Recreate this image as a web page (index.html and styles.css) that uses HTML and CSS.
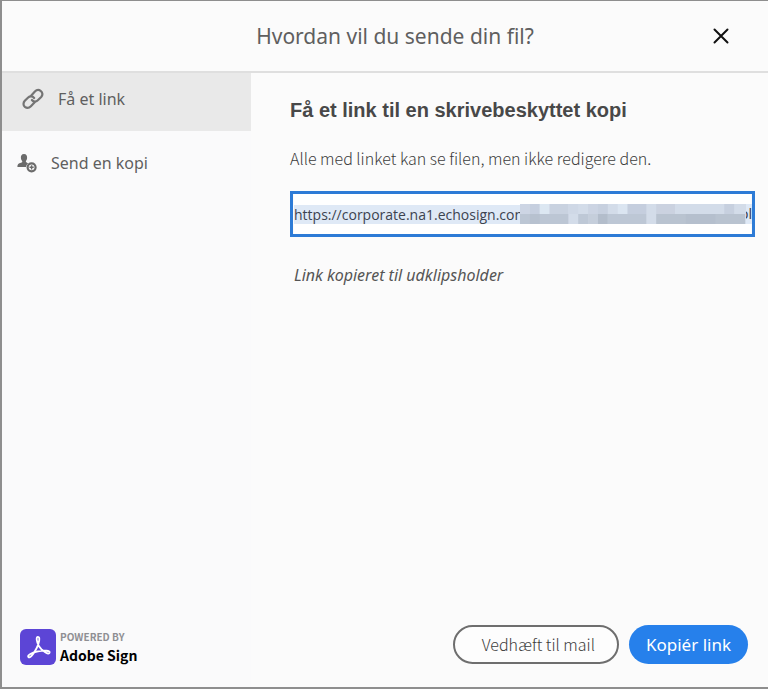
FILE: index.html
```html
<!DOCTYPE html>
<html lang="da">
<head>
    <meta charset="UTF-8">
    <meta name="viewport" content="width=device-width, initial-scale=1.0">
    <title>Hvordan vil du sende din fil?</title>
    <link rel="stylesheet" href="styles.css">
</head>
<body>
    <div class="dialog">
        <header class="dialog-header">
            <h1>Hvordan vil du sende din fil?</h1>
            <button class="close" type="button" aria-label="Luk">
                <svg width="16" height="16" viewBox="0 0 16 16">
                    <path d="M1.5 1.5L14.5 14.5M14.5 1.5L1.5 14.5" fill="none" stroke="#111" stroke-width="2" stroke-linecap="round"/>
                </svg>
            </button>
        </header>
        <div class="dialog-body">
            <aside class="sidebar">
                <nav>
                    <a class="nav-item active" href="#link">
                        <svg width="22" height="22" viewBox="0 0 22 22">
                            <g fill="none" stroke="#747474" stroke-width="2.2" stroke-linecap="round">
                                <path d="M9.3 7.6L12.9 3.6C14.3 2 16.6 1.3 18.6 2.8C20.9 4.6 20.9 7.1 19.2 9L15.8 12.3C14 14 11.4 13.9 9.9 12"/>
                                <path d="M12.7 14.2L8.9 18.2C7.2 20 4.8 20.4 2.9 18.9C1 17.2 1.1 14.7 2.8 12.8L6.2 9.5C8 7.8 10.6 8.1 12.1 10"/>
                            </g>
                        </svg>
                        Få et link
                    </a>
                    <a class="nav-item copy" href="#kopi">
                        <svg width="20" height="20" viewBox="0 0 20 20">
                            <path d="M7 1C9.4 1 10.3 2.7 10.1 5C10 6.7 9.1 7.6 8.8 8.6C8.9 9.5 10.3 9.9 11.1 10.4A5.2 5.2 0 0 0 9 14H.4C.3 11.2 1.5 10.4 4 9.8C5 9.5 5.3 9.3 5.3 8.6C4.9 7.6 4 6.7 3.9 5C3.7 2.7 4.6 1 7 1Z" fill="#6b6b6b"/>
                            <circle cx="14.6" cy="14.3" r="4" fill="none" stroke="#6b6b6b" stroke-width="2.2"/>
                            <path d="M14.6 12.2V16.4M12.5 14.3H16.7" stroke="#6b6b6b" stroke-width="1.4"/>
                        </svg>
                        Send en kopi
                    </a>
                </nav>
                <div class="brand">
                    <svg width="36" height="36" viewBox="0 0 36 36">
                        <rect width="36" height="36" rx="6" fill="#5c45d6"/>
                        <path d="M8.4 28C6.8 26.4 12 23.4 18 22.3C24 21.2 30.4 21.4 29.6 23.8C28.7 26.2 22.2 22.4 19 17.2C16.5 13 15.8 7.8 18 7.8C20.4 7.8 19.2 14 16.7 19C13.6 25.2 10 29.6 8.4 28Z" fill="none" stroke="#fff" stroke-width="1.8" stroke-linejoin="round"/>
                    </svg>
                    <div>
                        <div class="powered">POWERED BY</div>
                        <div class="product">Adobe Sign</div>
                    </div>
                </div>
            </aside>
            <main class="content">
                <h2>Få et link til en skrivebeskyttet kopi</h2>
                <label class="hint" for="shareLink">Alle med linket kan se filen, men ikke redigere den.</label>
                <div class="link-field">
                    <input type="text" id="shareLink" value="https://corporate.na1.echosign.con" readonly>
                    <div class="masked">
                        <svg width="229" height="20" viewBox="0 0 229 20" preserveAspectRatio="none">
                            <rect width="229" height="20" fill="#d3dce9"/>
                            <rect width="10" height="10" fill="#cdd5e4"/>
                            <rect x="10" width="10" height="10" fill="#c6cfdf"/>
                            <rect x="20" width="10" height="10" fill="#dce7f2"/>
                            <rect x="30" width="19" height="10" fill="#c9d2e0"/>
                            <rect x="49" width="10" height="10" fill="#cfd8e6"/>
                            <rect x="69" width="10" height="10" fill="#ccd4e3"/>
                            <rect x="79" width="10" height="10" fill="#c7d0df"/>
                            <rect x="99" width="10" height="10" fill="#dbe5f1"/>
                            <rect x="109" width="19" height="10" fill="#c5cede"/>
                            <rect x="138" width="19" height="10" fill="#cbd2e0"/>
                            <rect x="207" width="10" height="10" fill="#c7d0df"/>
                            <rect y="10" width="49" height="10" fill="#bcc6d4"/>
                            <rect x="10" y="10" width="10" height="10" fill="#b7c1cf"/>
                            <rect x="59" y="10" width="10" height="10" fill="#bec8d6"/>
                            <rect x="69" y="10" width="10" height="10" fill="#c5cedb"/>
                            <rect x="79" y="10" width="10" height="10" fill="#b3bdcb"/>
                            <rect x="89" y="10" width="39" height="10" fill="#bdc7d5"/>
                            <rect x="138" y="10" width="90" height="10" fill="#b9c3d0"/>
                            <rect x="168" y="10" width="30" height="10" fill="#b5bfcd"/>
                        </svg>
                        <span>ol</span>
                    </div>
                </div>
                <p class="status">Link kopieret til udklipsholder</p>
                <div class="actions">
                    <button class="btn btn-outline" type="button">Vedhæft til mail</button>
                    <button class="btn btn-primary" type="button">Kopiér link</button>
                </div>
            </main>
        </div>
    </div>
</body>
</html>
```
FILE: styles.css
```css
* {
    box-sizing: border-box;
}
body {
    margin: 0;
    font-family: "Noto Sans", "Open Sans", sans-serif;
    color: #5f5f5f;
}
button {
    font-family: inherit;
    cursor: pointer;
}
.dialog {
    display: flex;
    flex-direction: column;
    min-height: 100vh;
    background: #fbfbfb;
    border: 1px solid #8e8e8e;
    border-left-width: 2px;
    border-right: 0;
    border-bottom-width: 2px;
}
.dialog-header {
    display: grid;
    grid-template-columns: 1fr auto 1fr;
    align-items: center;
    height: 72px;
    padding: 0 33px 0 53px;
    border-bottom: 2px solid #dfdfdf;
}
.dialog-header h1 {
    grid-column: 2;
    margin: 0;
    font-size: 21px;
    font-weight: 400;
}
.close {
    justify-self: end;
    padding: 6px;
    border: 0;
    background: none;
    line-height: 0;
}
.dialog-body {
    display: flex;
    flex: 1;
}
.sidebar {
    display: flex;
    flex-direction: column;
    justify-content: space-between;
    width: 249px;
    background: #fafafb;
}
.nav-item {
    display: flex;
    align-items: center;
    gap: 14px;
    height: 58px;
    padding: 0 20px 6px;
    font-size: 16px;
    color: #5f5f5f;
    text-decoration: none;
}
.nav-item.active {
    background: #e9e9e9;
}
.nav-item.copy {
    height: 70px;
    padding-left: 15px;
}
.brand {
    display: flex;
    align-items: center;
    gap: 4px;
    padding: 0 18px 22px;
    font-family: "Noto Sans CJK JP", sans-serif;
    font-weight: 700;
}
.brand svg {
    flex: none;
}
.powered {
    font-size: 10px;
    line-height: 16px;
    color: #8f8f93;
}
.product {
    font-size: 14px;
    line-height: 20px;
    color: #000;
}
.content {
    display: flex;
    flex-direction: column;
    flex: 1;
    min-width: 0;
    padding: 24px 13px 23px 39px;
}
.content h2 {
    margin: 0 0 22px;
    font-family: "Liberation Sans", Arial, sans-serif;
    font-size: 20px;
    line-height: 26px;
    color: #484848;
}
.hint {
    font-family: "Noto Sans CJK JP", sans-serif;
    font-size: 16px;
    font-weight: 300;
    line-height: 26px;
    color: #3c3c3c;
}
.link-field {
    position: relative;
    margin-top: 20px;
}
.link-field input {
    display: block;
    width: 100%;
    height: 46px;
    padding: 0 1px;
    border: 3px solid #2d7bd6;
    font-family: "Open Sans", sans-serif;
    font-size: 14px;
    color: #3c4350;
    background: linear-gradient(#dfe9f6, #dfe9f6) center / 100% 19px no-repeat content-box #fff;
    outline: 0;
}
/* pixelated part of the address */
.masked {
    position: absolute;
    top: 13px;
    left: 230px;
    right: 3px;
    display: flex;
    height: 20px;
    overflow: hidden;
    font-size: 14px;
    line-height: 20px;
    color: #3c4350;
    background: #dfe9f6;
}
.masked svg {
    flex: 1;
    min-width: 0;
}
.masked span {
    width: 6px;
    overflow: hidden;
    direction: rtl;
}
.status {
    margin: 26px 4px;
    font-size: 16px;
    line-height: 24px;
    font-style: italic;
    color: #555;
}
.actions {
    display: flex;
    justify-content: flex-end;
    gap: 10px;
    margin-top: auto;
    padding-right: 7px;
}
.btn {
    height: 39px;
    border-radius: 20px;
    white-space: nowrap;
}
.btn-outline {
    padding: 0 22px 2px 27px;
    border: 2px solid #6e6e6e;
    background: #fdfdfd;
    font-family: "Noto Sans CJK JP", sans-serif;
    font-size: 16px;
    font-weight: 300;
    color: #3c3c3c;
}
.btn-primary {
    padding: 0 17px;
    border: 0;
    background: #2680eb;
    font-size: 17px;
    color: #fff;
}
```
